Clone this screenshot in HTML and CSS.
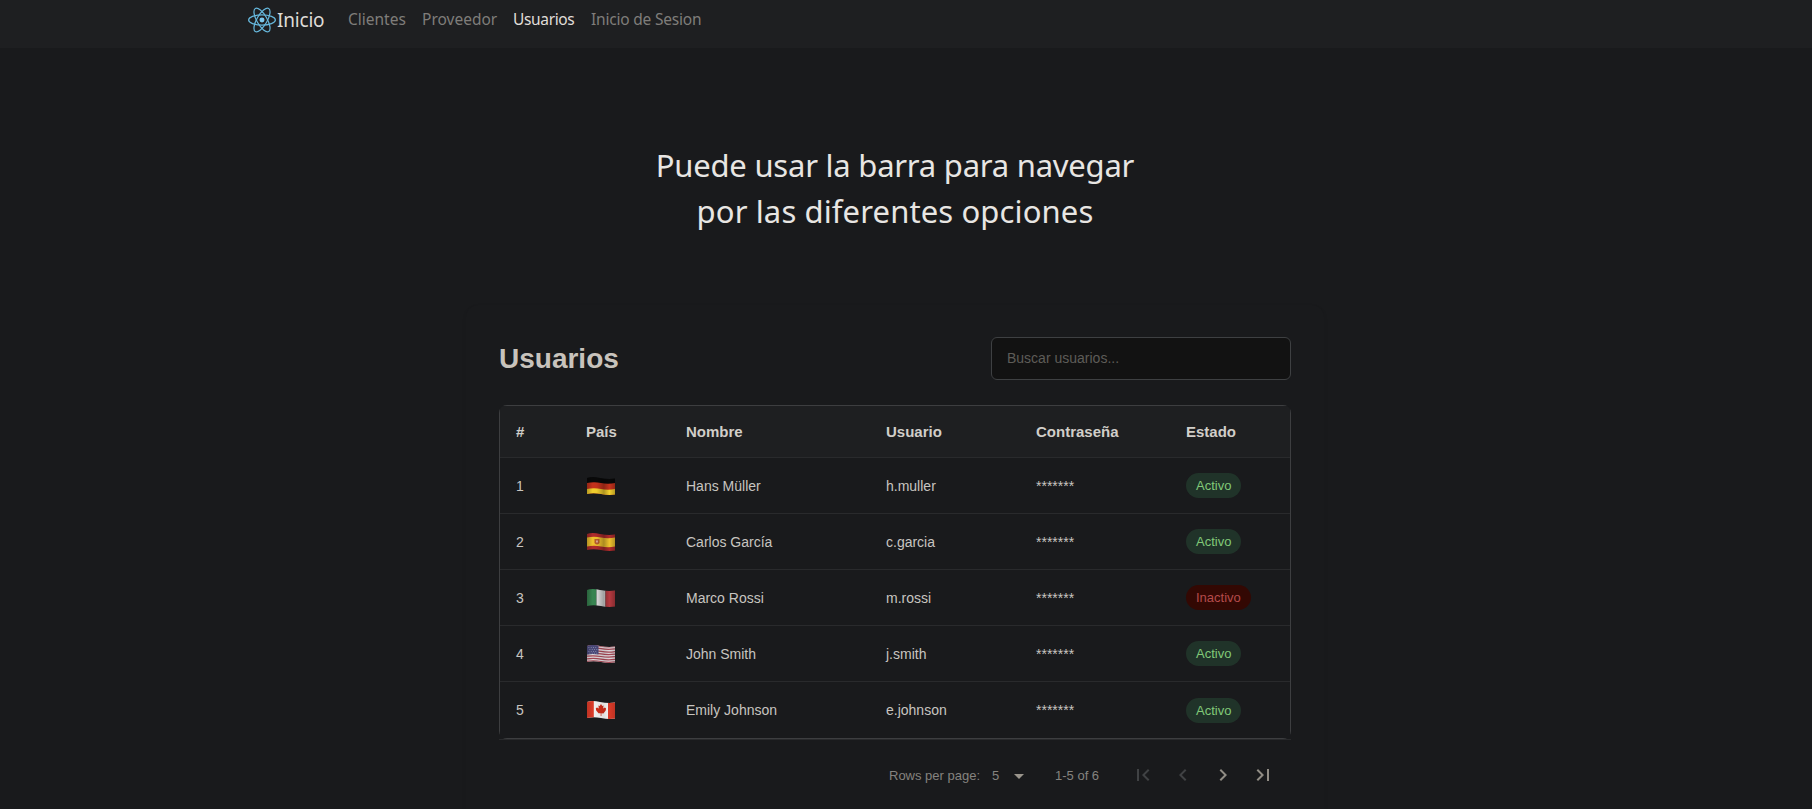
FILE: index.html
```
<!DOCTYPE html>
<html lang="es">
<head>
<meta charset="utf-8">
<title>Usuarios</title>
<link rel="stylesheet" href="styles.css">
</head>
<body>
<nav class="navbar">
  <a class="brand">
    <svg class="logo" viewBox="-11.5 -10.6 23 21.2" fill="none" stroke="#66b7dc" stroke-width="1"><circle r="2.05" fill="#7cc8ec" stroke="none"/><ellipse rx="11" ry="4.2"/><ellipse rx="11" ry="4.2" transform="rotate(60)"/><ellipse rx="11" ry="4.2" transform="rotate(120)"/></svg><span>Inicio</span>
  </a>
  <a class="link l1">Clientes</a>
  <a class="link l2">Proveedor</a>
  <a class="link l3 active">Usuarios</a>
  <a class="link l4">Inicio de Sesion</a>
</nav>
<h1 class="hero"><span class="h1a">Puede usar la barra para navegar</span><span class="h1b">por las diferentes opciones</span></h1>
<main class="card">
  <header class="card-head">
    <h2>Usuarios</h2>
    <input class="search" placeholder="Buscar usuarios...">
  </header>
  <div class="table">
    <div class="row head"><div>#</div><div>País</div><div>Nombre</div><div>Usuario</div><div>Contraseña</div><div>Estado</div></div>
    <div class="row"><div>1</div><div><svg class="flag" viewBox="0 0 28 18"><g clip-path="url(#wave)"><path fill="#090909" d="M0 0h28v18H0z"/><path fill="#c5321c" d="M0 6q7-1.500 14 0t14 0v12H0z"/><path fill="#f2cf2d" d="M0 12q7-1.500 14 0t14 0v6H0z"/><path fill="url(#shade)" d="M0 0h28v18H0z"/></g></svg></div><div>Hans Müller</div><div>h.muller</div><div>*******</div><div><span class="badge on">Activo</span></div></div>
    <div class="row"><div>2</div><div><svg class="flag" viewBox="0 0 28 18"><g clip-path="url(#wave)"><path fill="#ae2b2c" d="M0 0h28v18H0z"/><path fill="#efc12d" d="M0 4.500q7-1.500 14 0t14 0v9q-7 1.500-14 0t-14 0z"/><path fill="#b65b2c" d="M7.500 6h5v4q-2.500 3-5 0z"/><path fill="#d9a590" d="M9 7.500h2v2H9z"/><path fill="url(#shade)" d="M0 0h28v18H0z"/></g></svg></div><div>Carlos García</div><div>c.garcia</div><div>*******</div><div><span class="badge on">Activo</span></div></div>
    <div class="row"><div>3</div><div><svg class="flag" viewBox="0 0 28 18"><g clip-path="url(#wave)"><path fill="#388451" d="M0 0h9.500v18H0z"/><path fill="#dedede" d="M9.500 0h9v18h-9z"/><path fill="#b53a40" d="M18.500 0H28v18h-9.500z"/><path fill="url(#shade)" d="M0 0h28v18H0z"/></g></svg></div><div>Marco Rossi</div><div>m.rossi</div><div>*******</div><div><span class="badge off">Inactivo</span></div></div>
    <div class="row"><div>4</div><div><svg class="flag" viewBox="0 0 28 18"><g clip-path="url(#wave)"><path fill="#ded6da" d="M0 0h28v18H0z"/><path fill="none" stroke="#a34552" stroke-width="1.250" d="M0 .8q7-1 14 .3t14 .2M0 3.400q7-1 14 .3t14 .2M0 6q7-1 14 .3t14 .2M0 8.600q7-1 14 .3t14 .2M0 11.200q7-1 14 .3t14 .2M0 13.800q7-1 14 .3t14 .2M0 16.400q7-1 14 .3t14 .2"/><path fill="#484878" d="M0 0h11.500v9.500Q6 8.500 0 9.500z"/><path stroke="#a5a3c2" stroke-width=".8" stroke-dasharray=".8 1.500" d="M1.500 2.500h9M2.500 4.500h8M1.500 6.500h9M2.500 8.200h8"/><path fill="url(#soft)" d="M0 0h28v18H0z"/></g></svg></div><div>John Smith</div><div>j.smith</div><div>*******</div><div><span class="badge on">Activo</span></div></div>
    <div class="row"><div>5</div><div><svg class="flag" viewBox="0 0 28 18"><g clip-path="url(#wave)"><path fill="#f4f2f1" d="M0 0h28v18H0z"/><path fill="#d93a28" d="M0 0h6.800v18H0zM21 0h7v18h-7z"/><path fill="#cf2d1a" d="M14 3l1.300 2 1.200-.5-.3 3 1.700-1 1.200 1-.4 2-2.300 3-2-.3V15h-.7v-2.800l-2.200.1-2.300-2.800-.4-2.200 1.200-.8 1.800 1-.4-3 1.300.5z"/><path fill="url(#soft)" d="M0 0h28v18H0z"/></g></svg></div><div>Emily Johnson</div><div>e.johnson</div><div>*******</div><div><span class="badge on">Activo</span></div></div>
  </div>
  <footer class="pager">
    <span class="rows">Rows per page:</span><span class="count">5</span><svg class="caret" viewBox="0 0 10 5"><path fill="currentColor" d="M0 0h10L5 5z"/></svg><span class="range">1-5 of 6</span>
    <div class="buttons">
      <svg class="dim" viewBox="0 0 24 24"><path d="M18.410 16.590 13.820 12l4.590-4.590L17 6l-6 6 6 6zM6 6h2v12H6z"/></svg>
      <svg class="dim" viewBox="0 0 24 24"><path d="M15.410 7.410 14 6l-6 6 6 6 1.410-1.410L10.830 12z"/></svg>
      <svg viewBox="0 0 24 24"><path d="M10 6 8.590 7.410 13.170 12l-4.580 4.590L10 18l6-6z"/></svg>
      <svg viewBox="0 0 24 24"><path d="M5.590 7.410 10.180 12l-4.590 4.590L7 18l6-6-6-6zM16 6h2v12h-2z"/></svg>
    </div>
  </footer>
</main>
<svg class="defs"><defs>
  <clipPath id="wave"><path d="M0 1Q5-.8 13 .9T28 1.500V17.500Q22 18.700 14 17T0 17z"/></clipPath>
  <linearGradient id="shade"><stop offset="0" stop-opacity=".25"/><stop offset=".2" stop-opacity="0"/><stop offset=".35" stop-opacity=".02"/><stop offset=".6" stop-opacity=".28"/><stop offset=".8" stop-opacity="0"/><stop offset="1" stop-opacity=".25"/></linearGradient>
  <linearGradient id="soft"><stop offset="0" stop-opacity=".12"/><stop offset=".2" stop-opacity="0"/><stop offset=".6" stop-opacity=".08"/><stop offset=".8" stop-opacity="0"/><stop offset="1" stop-opacity=".12"/></linearGradient>
</defs></svg>
</body>
</html>
```
FILE: styles.css
```
* { box-sizing: border-box; }
body { margin: 0; height: 809px; overflow: hidden; background: #191a1c; color: #c8c5c0; font: 14px "Liberation Sans", Arial, sans-serif; }
.navbar { height: 48px; background: #1e1f21; padding: 0 0 9px 248px; display: flex; align-items: center; font-family: "Noto Sans", sans-serif; font-weight: 400; white-space: nowrap; }
.brand { display: flex; align-items: center; width: 100px; font-size: 19px; color: #dedbd7; }
.brand span { letter-spacing: -.2px; }
.logo { width: 28px; height: 26px; margin: 1px 1px 0 0; }
.link { font-size: 15.500px; color: #7f7d7a; letter-spacing: -.2px; padding-bottom: 2px; }
.l1 { width: 74px; letter-spacing: 0; }
.l2 { width: 91px; letter-spacing: 0; }
.l3 { width: 78px; letter-spacing: -.35px; }
.active { color: #e0ddd9; }
.hero { margin: 0; padding-top: 94px; height: 257px; display: flex; flex-direction: column; align-items: center; font: 400 31px/46px "Noto Sans", sans-serif; color: #e8e6e3; padding-right: 22px; }
.h1a { letter-spacing: -.23px; }
.h1b { letter-spacing: .12px; }
.card { width: 858px; height: 540px; margin-left: 466px; padding: 32px 33px; border-radius: 12px; background: #191a1c; box-shadow: 0 2px 4px rgba(0,0,0,.08); }
.card-head { display: flex; justify-content: space-between; align-items: center; height: 43px; margin-bottom: 25px; }
h2 { margin: 0; font-size: 28px; line-height: 32px; color: #c8c3bc; }
.search { width: 300px; height: 43px; padding: 0 15px 2px; border: 1px solid #3e4042; border-radius: 6px; background: #121212; font: 14px "Liberation Sans", Arial, sans-serif; }
.search::placeholder { color: #5e5c58; }
.table { border: 1px solid #3d3e40; clip-path: inset(0 round 8px); height: 334px; }
.row { display: grid; grid-template-columns: 70px 100px 200px 150px 150px 120px; height: 56px; align-items: center; border-bottom: 1px solid #292a2c; }
.row:last-child { border: 0; }
.row > div { padding-left: 16px; }
.head { height: 52px; background: #1e1f21; font-size: 15px; font-weight: 700; color: #d1cec9; }
.flag { display: block; width: 28px; height: 18px; margin: 1px 0 0 1px; }
.row:last-child .flag { margin-top: 0; }
.badge { display: inline-block; height: 25px; padding: 0 10px; border-radius: 13px; font-size: 13px; line-height: 25px; }
.on { background: #203329; color: #81c978; }
.off { background: #330803; color: #b54b4b; }
.pager { display: flex; align-items: center; border-top: 1px solid #292a2c; height: 71px; padding-left: 390px; font-size: 13px; color: #85837f; }
.rows { width: 103px; }
.count { width: 22px; }
.caret { width: 10px; height: 5px; margin-top: 3px; color: #9a958c; }
.range { margin-left: 31px; width: 69px; }
.buttons { display: flex; gap: 16px; margin-left: 7px; }
.buttons svg { width: 24px; height: 24px; fill: #918d85; }
.buttons .dim { fill: #404244; }
.defs { position: absolute; width: 0; height: 0; }
```
